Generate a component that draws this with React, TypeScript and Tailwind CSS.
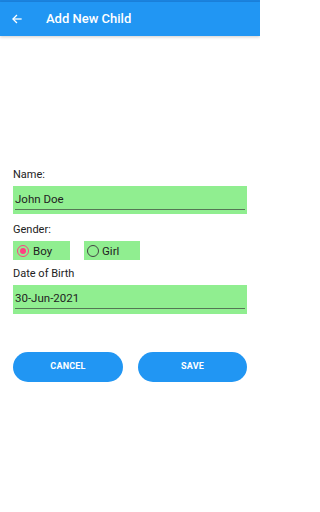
import React from "react";

export default function App() {
  return (
    <div className="w-[260px] h-[512px] bg-white relative overflow-hidden" style={{ fontFamily: "Roboto, 'Liberation Sans', sans-serif" }}>
      <div className="h-[2px] bg-[#1b84e0]" />
      <div className="h-[34px] bg-[#2196F3] flex items-center shadow-[0_1px_3px_rgba(0,0,0,0.2)] relative z-10">
        <svg width="12" height="12" viewBox="0 0 24 24" className="ml-[11px]" fill="none" stroke="white" strokeWidth="2.6" strokeLinecap="square">
          <path d="M20 12H5" />
          <path d="M11 5l-7 7 7 7" strokeLinejoin="miter" />
        </svg>
        <span className="ml-[23px] text-white text-[13px] font-medium">Add New Child</span>
      </div>
      <div className="px-[13px] pt-[132px] text-[#222]">
        <div className="text-[11px] leading-[13px]">Name:</div>
        <div className="mt-[5px] h-[28px] bg-[#90EE90] px-[2px] flex flex-col">
          <div className="flex-1 flex items-end pb-[3px] text-[11.5px] leading-[14px] border-b border-[#557755]">John Doe</div>
          <div className="h-[4px]" />
        </div>
        <div className="mt-[9px] text-[11px] leading-[13px]">Gender:</div>
        <div className="mt-[5px] flex gap-[14px]">
          <div className="w-[57px] h-[19px] bg-[#90EE90] flex items-center pl-[4px]">
            <span className="w-[12px] h-[12px] rounded-full border-[1.5px] border-[#FF4081] flex items-center justify-center">
              <span className="w-[6px] h-[6px] rounded-full bg-[#FF4081]" />
            </span>
            <span className="ml-[4px] text-[11.5px] leading-[14px]">Boy</span>
          </div>
          <div className="w-[56px] h-[19px] bg-[#90EE90] flex items-center pl-[3px]">
            <span className="w-[12px] h-[12px] rounded-full border-[1.5px] border-[#444]" />
            <span className="ml-[3px] text-[11.5px] leading-[14px]">Girl</span>
          </div>
        </div>
        <div className="mt-[7px] text-[11px] leading-[13px]">Date of Birth</div>
        <div className="mt-[5px] h-[29px] bg-[#90EE90] px-[2px] flex flex-col">
          <div className="flex-1 flex items-end pb-[3px] text-[11.5px] leading-[14px] border-b border-[#557755]">30-Jun-2021</div>
          <div className="h-[5px]" />
        </div>
        <div className="mt-[38px] flex justify-between">
          <button className="w-[110px] h-[30px] rounded-full bg-[#2196F3] text-white text-[9px] font-bold tracking-[0.2px]">CANCEL</button>
          <button className="w-[109px] h-[30px] rounded-full bg-[#2196F3] text-white text-[9px] font-bold tracking-[0.2px]">SAVE</button>
        </div>
      </div>
    </div>
  );
}
